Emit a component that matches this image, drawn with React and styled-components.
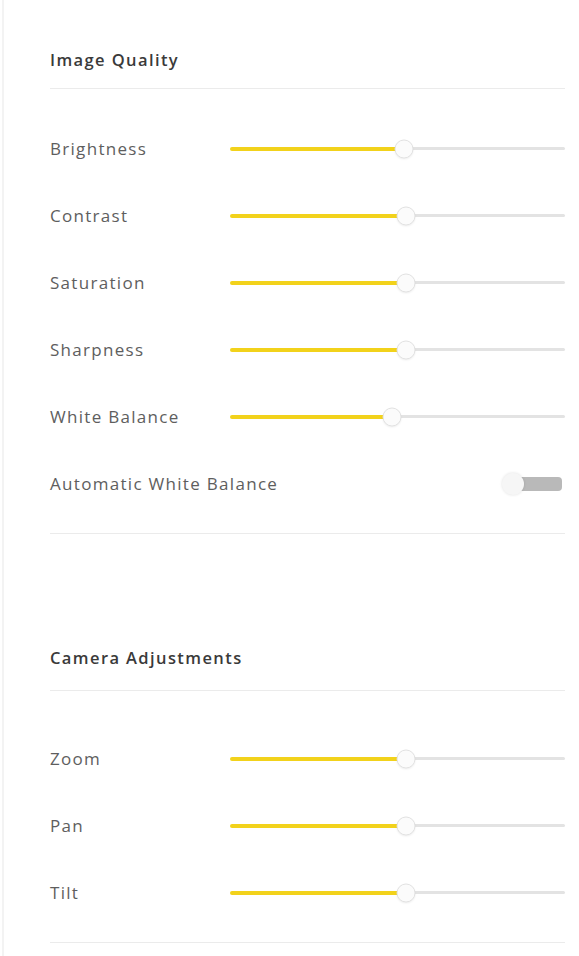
import React from "react";
import styled, { createGlobalStyle } from "styled-components";

const Global = createGlobalStyle`
  html, body { margin: 0; padding: 0; background: #fff; }
  body { font-family: "Open Sans", "Noto Sans", sans-serif; }
`;

const Page = styled.div`
  padding-left: 2px;
  min-height: 956px;
  box-sizing: border-box;
`;

const Panel = styled.div`
  border-left: 2px solid #f3f3f3;
  min-height: 956px;
  padding: 0 14px 0 46px;
  box-sizing: border-box;
`;

const Section = styled.section`
  padding-top: ${(p) => p.$top}px;
  padding-bottom: 16px;
  border-bottom: 1px solid #ebebeb;
`;

const Title = styled.h2`
  margin: 0;
  font-size: 16.5px;
  line-height: 20px;
  font-weight: 600;
  letter-spacing: 1.4px;
  color: #3a3a3a;
  padding-bottom: ${(p) => p.$gap}px;
  border-bottom: 1px solid #ebebeb;
`;

const Rows = styled.div`
  display: flex;
  flex-direction: column;
  padding-top: ${(p) => p.$top}px;
`;

const Row = styled.div`
  height: 67px;
  display: grid;
  grid-template-columns: 180px 1fr;
  align-items: center;
`;

const Label = styled.span`
  font-size: 17px;
  letter-spacing: 1.3px;
  color: #5e5e5e;
  white-space: nowrap;
  font-weight: 400;
`;

const Track = styled.div`
  position: relative;
  height: 4px;
  display: flex;
  align-items: center;
`;

const Filled = styled.div`
  height: 4px;
  background: #f2d21b;
  border-radius: 2px;
`;

const Rest = styled.div`
  flex: 1;
  height: 3px;
  background: #e3e3e3;
  border-radius: 2px;
`;

const Thumb = styled.div`
  position: absolute;
  top: 50%;
  width: 19px;
  height: 19px;
  border-radius: 50%;
  background: #fbfbfb;
  border: 1px solid #e2e2e2;
  box-shadow: 0 1px 2px rgba(0, 0, 0, 0.06);
  transform: translate(-50%, -50%);
  box-sizing: border-box;
`;

const ToggleRow = styled(Row)`
  grid-template-columns: 1fr auto;
`;

const Toggle = styled.div`
  position: relative;
  width: 60px;
  height: 22px;
  display: flex;
  align-items: center;
  margin-right: 3px;
`;

const ToggleTrack = styled.div`
  margin-left: 10px;
  flex: 1;
  height: 14px;
  border-radius: 4px;
  background: #b9b9b9;
`;

const Knob = styled.div`
  position: absolute;
  left: 0;
  top: 0;
  width: 22px;
  height: 22px;
  border-radius: 50%;
  background: #f6f6f6;
  box-shadow: 0 0 3px rgba(0, 0, 0, 0.12);
`;

function Slider({ value }) {
  return (
    <Track>
      <Filled style={{ width: `${value}%` }} />
      <Rest />
      <Thumb style={{ left: `${value}%` }} />
    </Track>
  );
}

const imageQuality = [
  { label: "Brightness", value: 52 },
  { label: "Contrast", value: 52.5 },
  { label: "Saturation", value: 52.5 },
  { label: "Sharpness", value: 52.5 },
  { label: "White Balance", value: 48.5 },
];

const camera = [
  { label: "Zoom", value: 52.5 },
  { label: "Pan", value: 52.5 },
  { label: "Tilt", value: 52.5 },
];

export default function App() {
  return (
    <Page>
      <Global />
      <Panel>
        <Section $top={50}>
          <Title $gap={18}>Image Quality</Title>
          <Rows $top={26}>
            {imageQuality.map((r) => (
              <Row key={r.label}>
                <Label>{r.label}</Label>
                <Slider value={r.value} />
              </Row>
            ))}
            <ToggleRow>
              <Label>Automatic White Balance</Label>
              <Toggle>
                <ToggleTrack />
                <Knob />
              </Toggle>
            </ToggleRow>
          </Rows>
        </Section>
        <Section $top={114}>
          <Title $gap={22}>Camera Adjustments</Title>
          <Rows $top={34}>
            {camera.map((r) => (
              <Row key={r.label}>
                <Label>{r.label}</Label>
                <Slider value={r.value} />
              </Row>
            ))}
          </Rows>
        </Section>
      </Panel>
    </Page>
  );
}
